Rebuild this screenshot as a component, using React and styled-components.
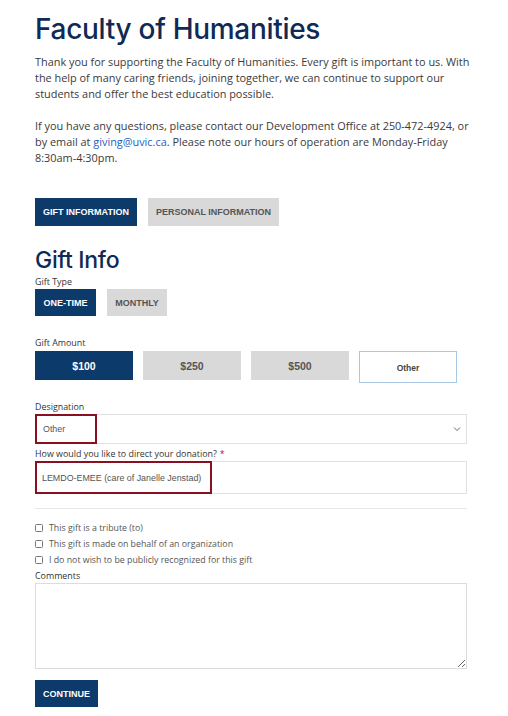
import React, { useState } from "react";
import styled, { createGlobalStyle } from "styled-components";

const GlobalStyle = createGlobalStyle`
  html, body {
    margin: 0;
    padding: 0;
    background: #ffffff;
  }
  body {
    font-family: "Open Sans", "Noto Sans", sans-serif;
    color: #333333;
  }
`;

const navy = "#0c3a6b";
const darkRed = "#8a0f21";

const Page = styled.div`
  width: 432px;
  padding: 11px 0 20px 35px;
`;

const Title = styled.h1`
  margin: 0;
  font-family: "Inter", "Lato", sans-serif;
  font-weight: 500;
  font-size: 28px;
  line-height: 36px;
  letter-spacing: -0.3px;
  color: #102a55;
`;

const Paragraph = styled.p`
  width: 440px;
  margin: ${(p) => p.$top || 0}px 0 0 0;
  font-size: 10.9px;
  line-height: 16px;
  color: #3a3a3a;
`;

const Link = styled.a`
  color: #1b5fc4;
  text-decoration: none;
`;

const ButtonRow = styled.div`
  display: flex;
  gap: ${(p) => p.$gap || 11}px;
  margin-top: ${(p) => p.$top || 0}px;
`;

const Pill = styled.button`
  border: none;
  border-radius: 0;
  margin: 0;
  height: ${(p) => p.$h || 28}px;
  width: ${(p) => (p.$w ? `${p.$w}px` : "auto")};
  padding: 0;
  white-space: nowrap;
  font-family: "Liberation Sans", Arial, sans-serif;
  font-weight: bold;
  font-size: ${(p) => p.$size || 9}px;
  text-transform: ${(p) => (p.$plain ? "none" : "uppercase")};
  background: ${(p) => (p.$active ? navy : "#d9d9d9")};
  color: ${(p) => (p.$active ? "#ffffff" : "#555555")};
  cursor: pointer;
`;

const OtherAmount = styled.button`
  margin: 0;
  width: 98px;
  height: 32px;
  box-sizing: border-box;
  border: 1px solid #a9c8e6;
  border-radius: 0;
  background: #ffffff;
  font-family: "Liberation Sans", Arial, sans-serif;
  font-weight: bold;
  font-size: 8.5px;
  color: #444444;
  padding: 2px 0 0 0;
`;

const SectionTitle = styled.h2`
  margin: 19px 0 0 0;
  font-family: "Inter", "Lato", sans-serif;
  font-weight: 500;
  font-size: 23px;
  line-height: 30px;
  letter-spacing: -0.3px;
  color: #102a55;
`;

const Label = styled.div`
  margin-top: ${(p) => p.$top || 0}px;
  font-size: 8.9px;
  line-height: 13px;
  color: #333333;
`;

const Required = styled.span`
  color: #b0142a;
  margin-left: 3px;
`;

const FieldBox = styled.div`
  display: flex;
  align-items: stretch;
  justify-content: space-between;
  box-sizing: border-box;
  height: ${(p) => p.$h}px;
  margin-top: 1px;
  border: 1px solid #e2e2e2;
  border-left: none;
  background: #ffffff;
`;

const Highlight = styled.div`
  display: flex;
  align-items: center;
  box-sizing: border-box;
  width: ${(p) => p.$w}px;
  margin: -1px 0;
  padding-left: ${(p) => p.$pad || 6}px;
  border: 2px solid ${darkRed};
  font-family: "Liberation Sans", Arial, sans-serif;
  font-size: 8.9px;
  color: #555555;
`;

const Chevron = styled.svg`
  align-self: center;
  margin-right: 5px;
`;

const Divider = styled.hr`
  margin: 14px 0 0 0;
  border: none;
  border-top: 1px solid #e6e6e6;
`;

const CheckList = styled.div`
  display: flex;
  flex-direction: column;
  margin-top: 11px;
`;

const CheckRow = styled.label`
  display: flex;
  align-items: center;
  gap: 6px;
  height: 16px;
  font-size: 8.8px;
  color: #555555;
  cursor: pointer;
`;

const Box = styled.span`
  width: 6px;
  height: 6px;
  border: 1px solid #777777;
  border-radius: 1.5px;
  background: ${(p) => (p.$on ? navy : "#ffffff")};
`;

const Comments = styled.textarea`
  display: block;
  box-sizing: border-box;
  width: 432px;
  height: 86px;
  margin-top: 1px;
  border: 1px solid #dcdcdc;
  border-radius: 0;
  resize: vertical;
  font-family: inherit;
`;

const Continue = styled(Pill)`
  margin-top: 11px;
  height: 27px;
  width: 63px;
`;

const amounts = ["$100", "$250", "$500"];
const extras = [
  "This gift is a tribute (to)",
  "This gift is made on behalf of an organization",
  "I do not wish to be publicly recognized for this gift",
];

export default function App() {
  const [tab, setTab] = useState(0);
  const [type, setType] = useState(0);
  const [amount, setAmount] = useState(0);
  const [checks, setChecks] = useState([false, false, false]);

  return (
    <Page>
      <GlobalStyle />
      <Title>Faculty of Humanities</Title>
      <Paragraph $top={7}>
        Thank you for supporting the Faculty of Humanities. Every gift is important to us. With
        the help of many caring friends, joining together, we can continue to support our
        students and offer the best education possible.
      </Paragraph>
      <Paragraph $top={16}>
        If you have any questions, please contact our Development Office at 250-472-4924, or
        by email at <Link href="#">giving@uvic.ca</Link>. Please note our hours of operation are Monday-Friday
        8:30am-4:30pm.
      </Paragraph>

      <ButtonRow $top={32}>
        <Pill $active={tab === 0} $w={102} onClick={() => setTab(0)}>Gift Information</Pill>
        <Pill $active={tab === 1} $w={131} onClick={() => setTab(1)}>Personal Information</Pill>
      </ButtonRow>

      <SectionTitle>Gift Info</SectionTitle>
      <Label>Gift Type</Label>
      <ButtonRow $top={1}>
        <Pill $active={type === 0} $w={61} $h={27} onClick={() => setType(0)}>One-Time</Pill>
        <Pill $active={type === 1} $w={60} $h={27} onClick={() => setType(1)}>Monthly</Pill>
      </ButtonRow>

      <Label $top={20}>Gift Amount</Label>
      <ButtonRow $top={2} $gap={10}>
        {amounts.map((a, i) => (
          <Pill key={a} $active={amount === i} $w={98} $h={29} $size={10.5} $plain onClick={() => setAmount(i)}>
            {a}
          </Pill>
        ))}
        <OtherAmount onClick={() => setAmount(3)}>Other</OtherAmount>
      </ButtonRow>

      <Label $top={17}>Designation</Label>
      <FieldBox $h={30}>
        <Highlight $w={62} $pad={6}>Other</Highlight>
        <Chevron width="8" height="6" viewBox="0 0 8 6">
          <path d="M1 1.5 L4 4.5 L7 1.5" fill="none" stroke="#666" strokeWidth="1" />
        </Chevron>
      </FieldBox>

      <Label $top={3}>
        How would you like to direct your donation?<Required>*</Required>
      </Label>
      <FieldBox $h={33}>
        <Highlight $w={177} $pad={5}>LEMDO-EMEE (care of Janelle Jenstad)</Highlight>
      </FieldBox>

      <Divider />

      <CheckList>
        {extras.map((t, i) => (
          <CheckRow key={t} onClick={() => setChecks(checks.map((c, j) => (j === i ? !c : c)))}>
            <Box $on={checks[i]} />
            {t}
          </CheckRow>
        ))}
      </CheckList>

      <Label $top={1}>Comments</Label>
      <Comments />

      <Continue $active>Continue</Continue>
    </Page>
  );
}
